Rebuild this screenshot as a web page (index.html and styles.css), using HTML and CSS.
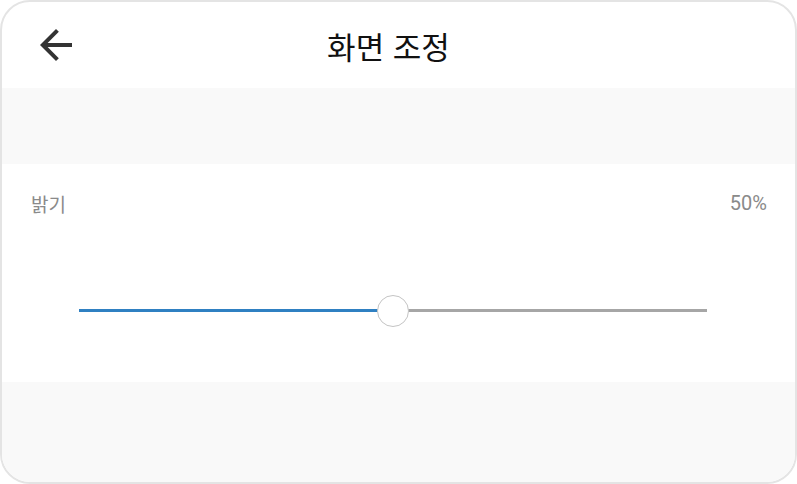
FILE: index.html
```html
<!DOCTYPE html>
<html lang="ko">
<head>
  <meta charset="UTF-8">
  <meta name="viewport" content="width=device-width, initial-scale=1.0">
  <title>화면 조정</title>
  <link rel="stylesheet" href="styles.css">
</head>
<body>

  <div class="card">
    <header class="top-bar">
      <button class="back-btn" aria-label="뒤로">
        <svg viewBox="0 0 24 24" width="48" height="48">
          <path d="M20 11H7.83l5.59-5.59L12 4l-8 8 8 8 1.41-1.41L7.83 13H20v-2z" fill="#333"/>
        </svg>
      </button>
      <h1 class="title">화면 조정</h1>
      <span></span>
    </header>

    <div class="band"></div>

    <section class="setting">
      <div class="setting-row">
        <span class="label">밝기</span>
        <span class="value">50%</span>
      </div>
      <div class="slider">
        <div class="track">
          <div class="track-fill" style="width: 50%"></div>
          <div class="thumb" style="left: 50%"></div>
        </div>
      </div>
    </section>

    <div class="band rest"></div>
  </div>

</body>
</html>
```

FILE: styles.css
```css
body {
  margin: 0;
  padding: 0;
  background-color: #fff;
  font-family: Roboto, "Noto Sans CJK KR", sans-serif;
}
.card {
  box-sizing: border-box;
  width: 797px;
  height: 484px;
  border: 2px solid #e4e4e4;
  border-radius: 30px;
  overflow: hidden;
  display: flex;
  flex-direction: column;
  background-color: #fff;
}
.top-bar {
  height: 86px;
  display: grid;
  grid-template-columns: 1fr auto 1fr;
  align-items: center;
  padding: 0 50px 0 30px;
}
.back-btn {
  width: 48px;
  height: 48px;
  padding: 0;
  border: none;
  background: none;
  display: flex;
}
.title {
  margin: 0;
  font-family: "Noto Sans CJK KR", sans-serif;
  font-size: 31px;
  font-weight: 400;
  color: #111;
}
.band {
  height: 76px;
  background-color: #f9f9f9;
}
.band.rest {
  flex: 1;
}
.setting {
  height: 218px;
  display: flex;
  flex-direction: column;
}
.setting-row {
  display: flex;
  justify-content: space-between;
  align-items: center;
  padding: 26px 28px 0 29px;
  height: 26px;
  font-size: 19px;
  color: #8a8a8a;
}
.label {
  font-family: "Noto Sans CJK KR", sans-serif;
}
.value {
  font-size: 20px;
}
.slider {
  margin: 93px 88px 0 77px;
}
.track {
  position: relative;
  height: 3px;
  background-color: #a6a6a6;
}
.track-fill {
  height: 100%;
  background-color: #2f80c2;
}
.thumb {
  position: absolute;
  top: 50%;
  width: 30px;
  height: 30px;
  border: 1px solid #c4c4c4;
  border-radius: 50%;
  background-color: #fff;
  transform: translate(-50%, -50%);
}
```
